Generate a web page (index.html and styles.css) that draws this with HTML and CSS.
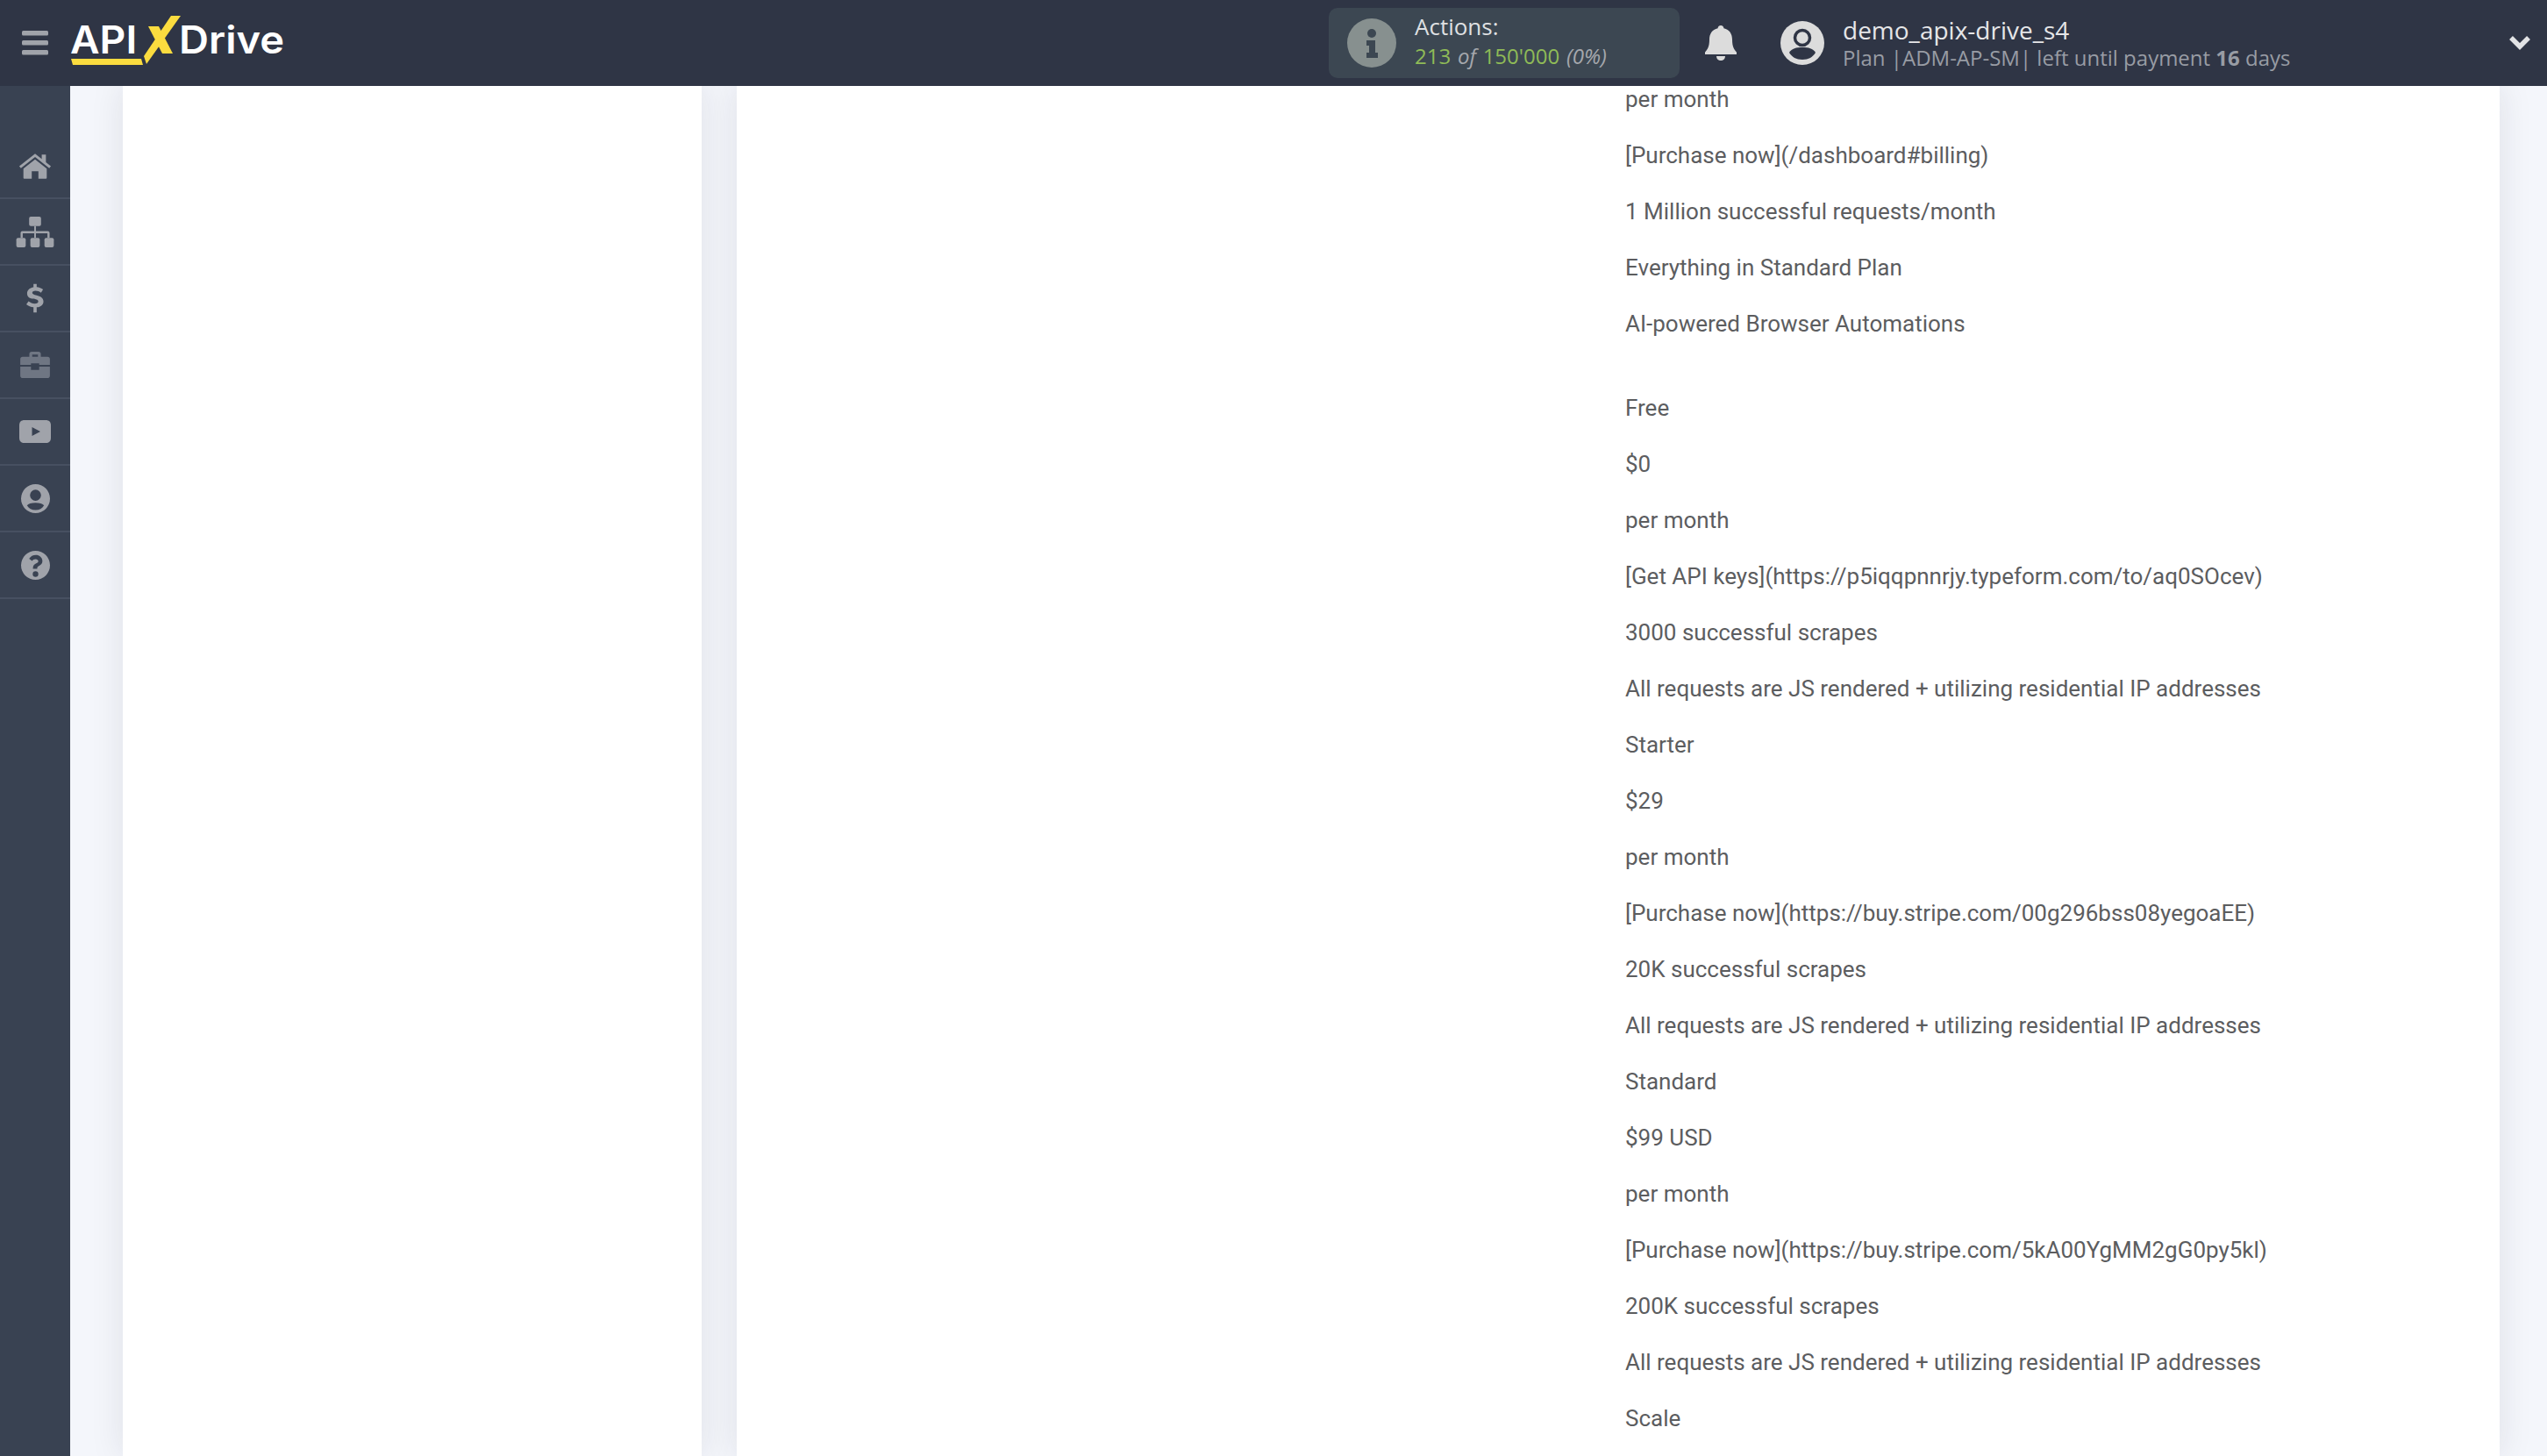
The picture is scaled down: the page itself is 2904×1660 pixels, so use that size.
FILE: index.html
```html
<!DOCTYPE html>
<html lang="en">
<head>
<meta charset="utf-8">
<title>ApiX-Drive</title>
<link rel="stylesheet" href="styles.css">
</head>
<body>
<header class="topbar">
  <div class="brand">
    <svg class="burger" viewBox="0 0 30 28" aria-hidden="true"><rect y="0" width="30" height="5.5" rx="1.5"/><rect y="11" width="30" height="5.5" rx="1.5"/><rect y="22" width="30" height="5.5" rx="1.5"/></svg>
    <div class="logo">
      <span class="logo-api">API</span>
      <svg class="logo-x" viewBox="0 0 48 58" aria-hidden="true"><polygon points="9,14 21,14 37,45 25,45" fill="#fbdc3f"/><polygon points="35,2 46,2 7,57 4,48" fill="#fbdc3f"/></svg>
      <span class="logo-drive">Drive</span>
      <svg class="logo-bar" viewBox="0 0 82 7" aria-hidden="true"><polygon points="0,0 80,0 82,7 2,7" fill="#fbdc3f"/></svg>
    </div>
  </div>
  <div class="actions">
    <svg class="info" viewBox="0 0 56 56" aria-hidden="true"><circle cx="28" cy="28" r="28" fill="#87908f"/><circle cx="28" cy="17" r="5" fill="#3c4752"/><path d="M22 25h10v14h3v6H22v-6h3v-8h-3z" fill="#3c4752"/></svg>
    <div class="actions-text">
      <div class="actions-label">Actions:</div>
      <div class="actions-value"><span class="green">213</span> <i>of</i> <span class="green">150'000</span> <i>(0%)</i></div>
    </div>
  </div>
  <svg class="bell" viewBox="0 0 36 40" aria-hidden="true"><path d="M18 0c2 0 3.400 1.400 3.400 3.300C28 4.600 31 10 31 16c0 9 2.500 11.500 5 14.500V33H0v-2.500C2.500 27.500 5 25 5 16 5 10 8 4.600 14.600 3.300 14.600 1.400 16 0 18 0z"/><path d="M13 35h10c0 3-2.200 5-5 5s-5-2-5-5z"/></svg>
  <div class="user">
    <svg class="avatar" viewBox="0 0 50 50" aria-hidden="true"><circle cx="25" cy="25" r="25" fill="#dcdcdc"/><circle cx="25" cy="19" r="8.500" fill="none" stroke="#2f3545" stroke-width="3.500"/><path d="M10 36c3-5 8-6 15-6s12 1 15 6c-3 5-8 8-15 8s-12-3-15-8z" fill="#2f3545"/></svg>
    <div class="user-text">
      <div class="user-name">demo_apix-drive_s4</div>
      <div class="user-plan">Plan |ADM-AP-SM| left until payment <b>16</b> days</div>
    </div>
  </div>
  <svg class="chevron" viewBox="0 0 26 17" aria-hidden="true"><path d="M3 3l10 10L23 3" fill="none" stroke="#e2e3e5" stroke-width="5.500"/></svg>
</header>
<div class="shell">
  <nav class="sidebar">
    <div class="nav-item"><svg class="ic-home" viewBox="0 0 40 32"><path d="M20 2L1 17l2 2.500L20 6l17 13.500L39 17l-6-4.700V3h-5v5.300z"/><path d="M20 9L6 20v11a1 1 0 001 1h9v-9h8v9h9a1 1 0 001-1V20z"/></svg></div>
    <div class="nav-item"><svg class="ic-org" viewBox="0 0 44 36"><rect x="15" width="14" height="11" rx="2"/><rect y="25" width="11" height="11" rx="2"/><rect x="16.500" y="25" width="11" height="11" rx="2"/><rect x="33" y="25" width="11" height="11" rx="2"/><path d="M21 11h2v6h14a2 2 0 012 2v6h-2.500v-5.500h-13.500V25h-2v-5.500H7.500V25H5v-6a2 2 0 012-2h14z"/></svg></div>
    <div class="nav-item"><svg class="ic-dollar" viewBox="0 0 22 36"><path d="M9 0h4v4c3 .3 6 1.500 8 3l-2.500 4c-2-1.400-4.500-2.400-7-2.400-2.500 0-4 1-4 2.500 0 1.800 2 2.400 5.500 3.400 4.500 1.300 8.500 3 8.500 7.500 0 4-3 6.800-8.500 7.400V36H9v-6.600c-3.500-.4-6.500-1.700-9-3.700l2.800-3.900c2.300 1.800 5 3 7.700 3 3 0 4.500-1 4.500-2.700 0-1.800-2-2.500-5.300-3.500C5 18.800 1 17.100 1 12c0-4 3-7 8-7.800z"/></svg></div>
    <div class="nav-item dim"><svg class="ic-case" viewBox="0 0 36 32"><path d="M11 6V3a3 3 0 013-3h8a3 3 0 013 3v3h8a3 3 0 013 3v7H23v-2H13v2H0V9a3 3 0 013-3zm3.500-2.500V6h7V3.500z"/><path d="M0 18h13v4h10v-4h13v11a3 3 0 01-3 3H3a3 3 0 01-3-3z"/></svg></div>
    <div class="nav-item"><svg class="ic-play" viewBox="0 0 36 26"><path fill-rule="evenodd" d="M6 0h24c4 0 6 2 6 6v14c0 4-2 6-6 6H6c-4 0-6-2-6-6V6c0-4 2-6 6-6zm8.500 8v10l9.500-5z"/></svg></div>
    <div class="nav-item"><svg class="ic-round" viewBox="0 0 34 34"><path fill-rule="evenodd" d="M17 0a17 17 0 110 34 17 17 0 010-34zm0 6.500a6.500 6.500 0 100 13 6.500 6.500 0 000-13zM7 25c2 3.500 5.500 5.500 10 5.500S25 28.500 27 25c-1.500-2-5-3-10-3s-8.500 1-10 3z"/></svg></div>
    <div class="nav-item"><svg class="ic-round" viewBox="0 0 34 34"><path fill-rule="evenodd" d="M17 0a17 17 0 110 34 17 17 0 010-34zm0 24a3.300 3.300 0 100 6.600 3.300 3.300 0 000-6.600zM17.500 5C13.800 5 11.300 6.600 9.500 9.300l3.400 2.600c1.100-1.400 2-2.200 4.300-2.200 1.600 0 3.100 1 3.100 2.400 0 1.200-.9 1.800-2.400 2.600-1.800 1-3.900 2.300-3.900 5.300v1h5v-.8c0-1.300.9-1.800 2.400-2.700 2-1.100 3.700-2.600 3.700-5.400C25.100 7.800 21.300 5 17.500 5z"/></svg></div>
  </nav>
  <main class="content">
    <section class="card card-left"></section>
    <section class="card card-main">
      <div class="text-col">
        <p>per month</p>
        <p>[Purchase now](/dashboard#billing)</p>
        <p>1 Million successful requests/month</p>
        <p>Everything in Standard Plan</p>
        <p>AI-powered Browser Automations</p>
        <p class="group-start">Free</p>
        <p>$0</p>
        <p>per month</p>
        <p>[Get API keys](https://p5iqqpnnrjy.typeform.com/to/aq0SOcev)</p>
        <p>3000 successful scrapes</p>
        <p>All requests are JS rendered + utilizing residential IP addresses</p>
        <p>Starter</p>
        <p>$29</p>
        <p>per month</p>
        <p>[Purchase now](https://buy.stripe.com/00g296bss08yegoaEE)</p>
        <p>20K successful scrapes</p>
        <p>All requests are JS rendered + utilizing residential IP addresses</p>
        <p>Standard</p>
        <p>$99 USD</p>
        <p>per month</p>
        <p>[Purchase now](https://buy.stripe.com/5kA00YgMM2gG0py5kl)</p>
        <p>200K successful scrapes</p>
        <p>All requests are JS rendered + utilizing residential IP addresses</p>
        <p>Scale</p>
      </div>
    </section>
  </main>
</div>
</body>
</html>
```
FILE: styles.css
```css
* { box-sizing: border-box; }
html, body { margin: 0; height: 100%; overflow: hidden; }
body { background: #f4f6fb; font-family: "Open Sans", sans-serif; display: flex; flex-direction: column; height: 1660px; }

.topbar { height: 98px; flex: none; background: #2f3545; display: flex; align-items: center; position: relative; z-index: 2; }
.brand { display: flex; align-items: center; width: 1515px; padding-left: 25px; height: 100%; }
.burger { width: 30px; height: 28px; fill: #a0a3aa; margin-top: -1px; }
.logo { position: relative; margin-left: 25px; height: 58px; width: 245px; color: #fff; font-family: "Inter", sans-serif; font-weight: 600; font-size: 44px; line-height: 50px; }
.logo-api { position: absolute; left: 0; top: 0; transform: scaleX(1.05); transform-origin: left center; }
.logo-x { position: absolute; left: 80px; top: -4px; width: 48px; height: 58px; }
.logo-drive { position: absolute; left: 124px; top: 0; transform: scaleX(1.07); transform-origin: left center; }
.logo-bar { position: absolute; left: 1px; top: 47px; width: 82px; height: 7px; }

.actions { width: 400px; height: 80px; flex: none; background: #3c4752; border-radius: 10px; display: flex; align-items: center; padding-left: 21px; }
.info { width: 56px; height: 56px; flex: none; }
.actions-text { margin-left: 21px; font-size: 24px; line-height: 33px; margin-top: -5px; }
.actions-label { color: #dfe0e2; font-size: 26px; }
.actions-value { color: #a5a8ad; white-space: nowrap; word-spacing: 1.5px; }
.green { color: #8fbb57; }
.bell { width: 36px; height: 40px; fill: #dcdcdc; margin-left: 29px; flex: none; }
.user { display: flex; align-items: center; margin-left: 50px; flex: none; }
.avatar { width: 50px; height: 50px; flex: none; }
.user-text { margin-left: 21px; }
.user-name { color: #e6e6e8; font-size: 28px; line-height: 34px; }
.user-plan { color: #989ca4; font-size: 24px; line-height: 30px; white-space: nowrap; }
.user-plan b { font-weight: 700; }
.chevron { position: absolute; right: 18px; top: 40px; width: 26px; height: 17px; }

.shell { flex: 1; display: flex; min-height: 0; }
.sidebar { width: 80px; flex: none; background: #394252; padding-top: 53px; }
.nav-item { height: 76px; border-bottom: 2px solid #475061; display: flex; align-items: center; justify-content: center; }
.nav-item svg { fill: #a0a3aa; }
.nav-item.dim svg { fill: #6f7683; }
.ic-home { width: 38px; height: 31px; }
.ic-org { width: 44px; height: 35px; }
.ic-dollar { width: 20px; height: 34px; }
.ic-case { width: 34px; height: 30px; }
.ic-play { width: 36px; height: 26px; }
.ic-round { width: 33px; height: 33px; }

.content { flex: 1; display: flex; min-width: 0; padding-left: 60px; padding-right: 54px; gap: 40px; }
.card { background: #fff; box-shadow: 0 0 36px rgba(30, 30, 50, 0.10); }
.card-left { width: 660px; flex: none; }
.card-main { flex: 1; padding-left: 1013px; overflow: hidden; }
.text-col { margin-top: -17px; color: #5c5d5f; font-family: "Roboto", sans-serif; font-size: 26px; line-height: 64px; }
.text-col p { margin: 0; white-space: nowrap; }
.group-start { margin-top: 32px !important; }
```
